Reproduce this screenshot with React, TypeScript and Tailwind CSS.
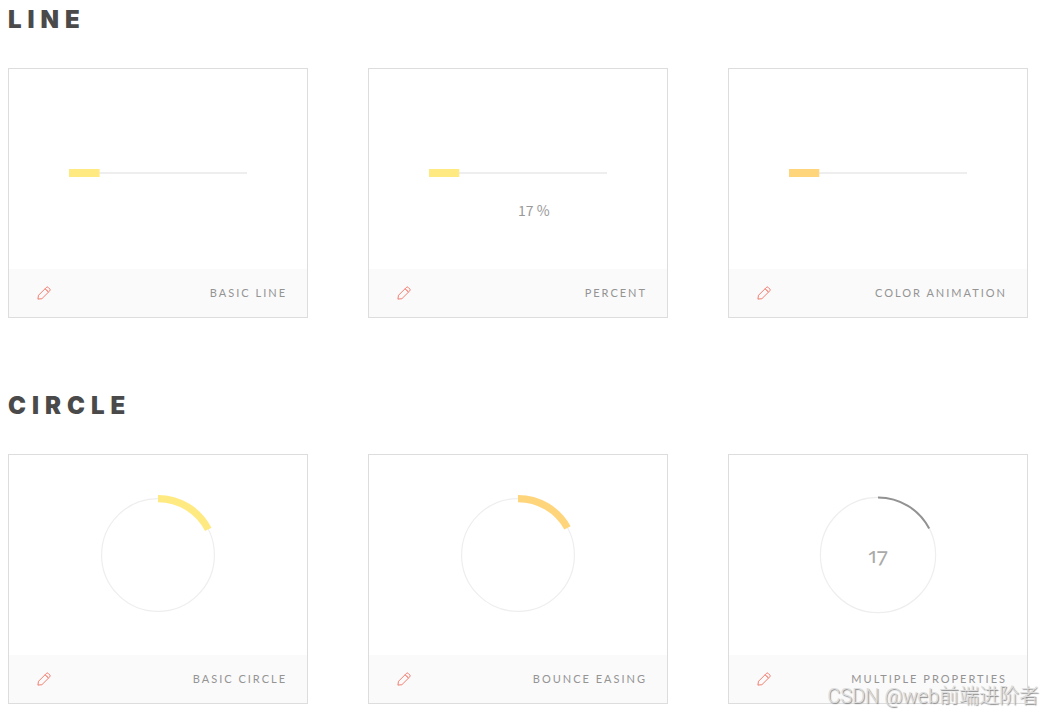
import type { ReactNode } from "react";

const CARD_TITLE = "font-['Lato',sans-serif] text-[11px] leading-4 tracking-[2px] text-[#949494] uppercase";

function PencilIcon() {
  return (
    <svg viewBox="0 0 14 14" className="size-3.5" fill="none" stroke="#f0604f" strokeWidth="0.8" strokeLinejoin="round" aria-hidden="true">
      <path d="M0.9 13.1 L1.5 9.3 L9.4 1.4 Q10.3 0.5 11.2 1.4 L12.8 3 Q13.7 3.9 12.8 4.8 L4.9 12.7 Z" />
      <path d="M8 2.8 L11.4 6.2" />
      <path d="M9.4 3.4 L11.3 5.2" strokeWidth="0.5" />
    </svg>
  );
}

function Card({ title, children }: { title: string; children: ReactNode }) {
  return (
    <article className="border border-[#dddddd] bg-white">
      <div className="h-[200px]">{children}</div>
      <footer className="flex h-12 items-center justify-between bg-[#fafafa] pr-5 pl-7">
        <a href="#edit" aria-label={`Edit ${title}`}>
          <PencilIcon />
        </a>
        <h3 className={CARD_TITLE}>{title}</h3>
      </footer>
    </article>
  );
}

function Line({ value, color, label }: { value: number; color: string; label?: string }) {
  return (
    <div className="mx-[60px] pt-[100px]">
      <svg viewBox="0 0 178 8" preserveAspectRatio="none" className="h-2 w-full" role="img" aria-label="Line progress">
        <path d="M0 4 H178" stroke="#eeeeee" strokeWidth="2" />
        <path d="M0 4 H178" stroke={color} strokeWidth="8" pathLength="100" strokeDasharray={`${value} 100`} />
      </svg>
      {label && (
        <p className="ml-[50%] pt-6 font-['Noto_Sans_CJK_SC',sans-serif] text-sm leading-[18px] text-[#999999]">{label}</p>
      )}
    </div>
  );
}

type RingProps = { value: number; color: string; radius: number; width: number; label?: string };

function Ring({ value, color, radius, width, label }: RingProps) {
  const top = 60 - radius;
  const d = `M60 ${top} a${radius} ${radius} 0 1 1 0 ${radius * 2} a${radius} ${radius} 0 1 1 0 ${-radius * 2}`;
  return (
    <div className="grid justify-items-center pt-10">
      <svg viewBox="0 0 120 120" className="col-start-1 row-start-1 size-[120px]" fill="none" role="img" aria-label="Circle progress">
        <path d={d} stroke="#eeeeee" strokeWidth="1.2" />
        <path d={d} stroke={color} strokeWidth={width} pathLength="100" strokeDasharray={`${value} 100`} />
      </svg>
      {label && (
        <span className="oldstyle-nums proportional-nums col-start-1 row-start-1 self-center font-['Lato',sans-serif] text-[22px] leading-6 text-[#aaaaaa]">
          {label}
        </span>
      )}
    </div>
  );
}

function Section({ title, children }: { title: string; children: ReactNode }) {
  return (
    <section>
      <h2 className="mb-8 font-['Inter',sans-serif] text-2xl leading-8 font-black tracking-[6px] text-[#4a4a4a] uppercase">
        {title}
      </h2>
      <div className="grid grid-cols-[repeat(auto-fill,300px)] gap-[60px]">{children}</div>
    </section>
  );
}

export default function App() {
  return (
    <main className="relative flex flex-col gap-[72px] bg-white px-2 pt-1 pb-2">
      <Section title="Line">
        <Card title="Basic Line">
          <Line value={17.2} color="#ffea82" />
        </Card>
        <Card title="Percent">
          <Line value={17} color="#ffea82" label="17 %" />
        </Card>
        <Card title="Color Animation">
          <Line value={17} color="#ffd57c" />
        </Card>
      </Section>
      <Section title="Circle">
        <Card title="Basic Circle">
          <Ring value={17.5} color="#ffea82" radius={56.4} width={7.2} />
        </Card>
        <Card title="Bounce Easing">
          <Ring value={17} color="#ffd57c" radius={56.4} width={7.2} />
        </Card>
        <Card title="Multiple Properties">
          <Ring value={17.4} color="#929292" radius={57.6} width={2} label="17" />
        </Card>
      </Section>
      <p className="pointer-events-none absolute right-1 bottom-1 font-['Roboto','Noto_Sans_CJK_SC',sans-serif] text-xl leading-6 font-light whitespace-nowrap text-[#dddddd] [text-shadow:1px_1px_1px_#888888]">
        CSDN @web前端进阶者
      </p>
    </main>
  );
}
